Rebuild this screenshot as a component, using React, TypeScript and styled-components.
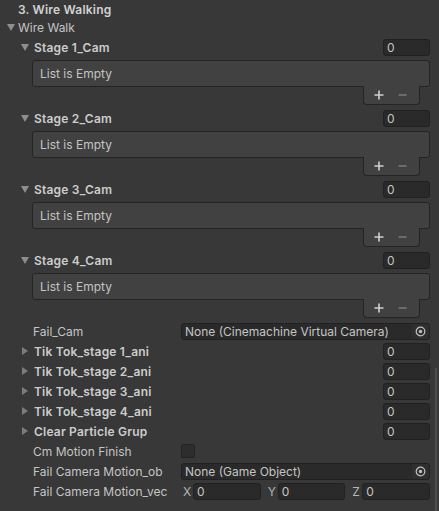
import styled, { createGlobalStyle } from "styled-components";

const GlobalStyle = createGlobalStyle`
  html, body {
    margin: 0;
    padding: 0;
    background: #383838;
    overflow: hidden;
  }
  body {
    font-family: Inter, "Noto Sans", sans-serif;
    font-size: 12px;
    color: #c4c4c4;
  }
`;

const Inspector = styled.div`
  position: relative;
  width: 439px;
  height: 511px;
  padding-right: 9px;
  box-sizing: border-box;
`;

const Scrollbar = styled.div`
  position: absolute;
  right: 2px;
  top: 368px;
  bottom: 0;
  width: 2px;
  background: #4e4e4e;
`;

const Row = styled.div<{ $indent: number; $h?: number }>`
  display: flex;
  align-items: center;
  height: ${(p) => p.$h ?? 20}px;
  padding-left: ${(p) => p.$indent}px;
`;

const Caret = styled.span<{ $open?: boolean; $gap: number }>`
  flex: 0 0 auto;
  width: 0;
  height: 0;
  margin-right: ${(p) => p.$gap}px;
  ${(p) =>
    p.$open
      ? `border-left: 4px solid transparent;
         border-right: 4px solid transparent;
         border-top: 7px solid #8e8e8e;`
      : `border-top: 4.5px solid transparent;
         border-bottom: 4.5px solid transparent;
         border-left: 6px solid #7c7c7c;`}
`;

const Label = styled.span<{ $bold?: boolean; $w?: number }>`
  flex: ${(p) => (p.$w ? `0 0 ${p.$w}px` : "1 1 auto")};
  font-weight: ${(p) => (p.$bold ? 600 : 400)};
  letter-spacing: ${(p) => (p.$bold ? "0.2px" : "0")};
  color: ${(p) => (p.$bold ? "#cccccc" : "#c4c4c4")};
  white-space: nowrap;
  overflow: hidden;
`;

const SectionTitle = styled(Label)`
  color: #d2d2d2;
`;

const Field = styled.div<{ $w?: number }>`
  flex: ${(p) => (p.$w ? `0 0 ${p.$w}px` : "1 1 auto")};
  min-width: 0;
  height: 17px;
  box-sizing: border-box;
  display: flex;
  align-items: center;
  background: #2a2a2a;
  border: 1px solid #212121;
  border-radius: 3px;
  padding-left: 3px;
  color: #c4c4c4;
  white-space: nowrap;
  overflow: hidden;
`;

const ObjectText = styled.span`
  flex: 1 1 auto;
  overflow: hidden;
`;

const Picker = styled.span`
  flex: 0 0 17px;
  height: 100%;
  display: flex;
  align-items: center;
  justify-content: center;
  background: #2f2f2f;
`;

const Checkbox = styled.div`
  width: 14px;
  height: 14px;
  box-sizing: border-box;
  background: #2d2d2d;
  border: 1px solid #232323;
  border-radius: 2px;
`;

const Block = styled.div`
  display: flex;
  flex-direction: column;
  margin-bottom: 3px;
`;

const ListBox = styled.div`
  margin: 3px 0 0 32px;
  height: 27px;
  box-sizing: border-box;
  display: flex;
  align-items: center;
  padding-left: 7px;
  background: #414141;
  border: 1px solid #242424;
  border-radius: 3px;
  color: #c4c4c4;
`;

const ListFooter = styled.div`
  align-self: flex-end;
  margin: -1px 10px 0 0;
  width: 57px;
  height: 19px;
  box-sizing: border-box;
  display: flex;
  align-items: center;
  justify-content: center;
  gap: 14px;
  padding-right: 2px;
  background: #414141;
  border: 1px solid #242424;
  border-top: none;
  border-radius: 0 0 4px 4px;
`;

const VecGroup = styled.div`
  flex: 1 1 0;
  display: flex;
  align-items: center;
  min-width: 0;
`;

const Axis = styled.span`
  flex: 0 0 12px;
  padding-left: 2px;
  box-sizing: border-box;
  color: #b4b4b4;
`;

const VecFields = styled.div`
  flex: 1 1 auto;
  display: flex;
  gap: 5px;
`;

function PickerIcon() {
  return (
    <svg width="11" height="11" viewBox="0 0 11 11">
      <circle cx="5.5" cy="5.5" r="4.3" fill="none" stroke="#c0c0c0" strokeWidth="1.2" />
      <circle cx="5.5" cy="5.5" r="1.7" fill="#c0c0c0" />
    </svg>
  );
}

function Plus() {
  return (
    <svg width="10" height="10" viewBox="0 0 10 10">
      <path d="M5 0.5V9.5M0.5 5H9.5" stroke="#d0d0d0" strokeWidth="1.6" />
    </svg>
  );
}

function Minus() {
  return (
    <svg width="9" height="10" viewBox="0 0 9 10">
      <path d="M0.5 5H8.5" stroke="#777777" strokeWidth="1.6" />
    </svg>
  );
}

function StageList({ name }: { name: string }) {
  return (
    <Block>
      <Row $indent={21}>
        <Caret $open $gap={5} />
        <Label $bold>{name}</Label>
        <Field $w={47}>0</Field>
      </Row>
      <ListBox>List is Empty</ListBox>
      <ListFooter>
        <Plus />
        <Minus />
      </ListFooter>
    </Block>
  );
}

function ObjectField({ value }: { value: string }) {
  return (
    <Field>
      <ObjectText>{value}</ObjectText>
      <Picker>
        <PickerIcon />
      </Picker>
    </Field>
  );
}

const stages = ["Stage 1_Cam", "Stage 2_Cam", "Stage 3_Cam", "Stage 4_Cam"];
const anims = [
  "Tik Tok_stage 1_ani",
  "Tik Tok_stage 2_ani",
  "Tik Tok_stage 3_ani",
  "Tik Tok_stage 4_ani",
  "Clear Particle Grup",
];

export default function App() {
  return (
    <>
      <GlobalStyle />
      <Inspector>
        <Row $indent={18} $h={18}>
          <SectionTitle $bold>3. Wire Walking</SectionTitle>
        </Row>
        <Row $indent={7} $h={19}>
          <Caret $open $gap={3} />
          <Label>Wire Walk</Label>
        </Row>
        {stages.map((s) => (
          <StageList key={s} name={s} />
        ))}
        <Row $indent={33}>
          <Label $w={148}>Fail_Cam</Label>
          <ObjectField value="None (Cinemachine Virtual Camera)" />
        </Row>
        {anims.map((a) => (
          <Row key={a} $indent={22}>
            <Caret $gap={6} />
            <Label $bold>{a}</Label>
            <Field $w={47}>0</Field>
          </Row>
        ))}
        <Row $indent={33}>
          <Label $w={148}>Cm Motion Finish</Label>
          <Checkbox />
        </Row>
        <Row $indent={33}>
          <Label $w={148}>Fail Camera Motion_ob</Label>
          <ObjectField value="None (Game Object)" />
        </Row>
        <Row $indent={33}>
          <Label $w={148}>Fail Camera Motion_vec</Label>
          <VecFields>
            {["X", "Y", "Z"].map((ax) => (
              <VecGroup key={ax}>
                <Axis>{ax}</Axis>
                <Field>0</Field>
              </VecGroup>
            ))}
          </VecFields>
        </Row>
        <Scrollbar />
      </Inspector>
    </>
  );
}
